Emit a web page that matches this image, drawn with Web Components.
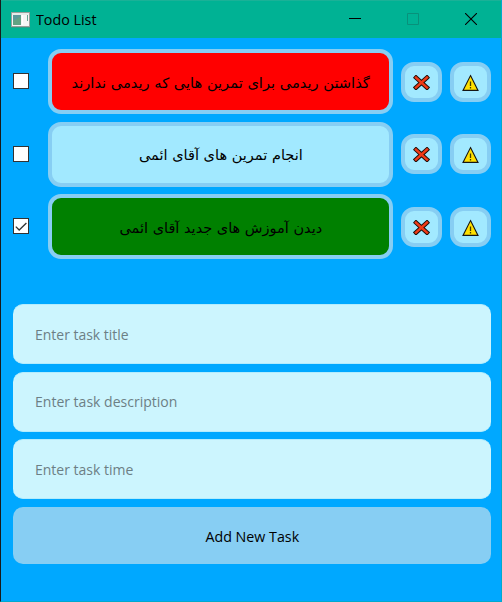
<!DOCTYPE html>
<html lang="fa">
<head>
<meta charset="utf-8">
<title>Todo List</title>
<style>
html,body{margin:0;height:100%;overflow:hidden}
body{font-family:"Open Sans","Noto Sans",sans-serif;font-size:15px;color:#000}
</style>
</head>
<body>
<todo-window></todo-window>
<script>
const define = (name, html, setup) => customElements.define(name, class extends HTMLElement {
  constructor() {
    super();
    const t = document.createElement('template');
    t.innerHTML = html;
    this.attachShadow({ mode: 'open' }).append(t.content.cloneNode(true));
  }
  connectedCallback() { if (setup) setup(this, this.shadowRoot); }
});

// Text squeezed horizontally to a given width, keeping letters joined.
define('fit-text', `<style>
:host{display:inline-flex;justify-content:center;white-space:nowrap;line-height:20px}
span{display:block;flex:none;transform-origin:50% 50%}
</style><span><slot></slot></span>`, (el, root) => {
  const span = root.querySelector('span');
  const want = +el.getAttribute('width');
  el.style.width = want + 'px';
  if (el.hasAttribute('start')) { el.style.justifyContent = 'flex-start'; span.style.transformOrigin = '0 50%'; }
  span.style.transform = `scaleX(${want / span.offsetWidth})`;
});

define('title-bar', `<style>
:host{display:flex;align-items:center;height:38px;background:#00b294;box-sizing:border-box;border-top:1px solid #1ab197;padding-left:10px}
svg{display:block;flex:none}
fit-text{margin-left:6px;margin-bottom:1px}
.gap{flex:1}
.controls{display:grid;grid-template-columns:58px 58px 58px;justify-items:center;align-items:center;margin-right:1px;margin-bottom:1px}
</style>
<svg width="19" height="16" viewBox="0 0 19 16"><rect x=".5" y=".5" width="18" height="14" fill="#f4f6f5" stroke="#999f9c"/><path d="M1 2h17" stroke="#d9e0dd"/><rect x="2" y="3" width="8" height="10" fill="#5b9a9c"/><path d="M2 13V9l8-5v9z" fill="#64a57c" opacity=".75"/><path d="M11.5 3v10" stroke="#fff"/><rect x="16" y="3" width="1" height="6" fill="#67a492"/><path d="M0 15.5h19" stroke="#568c7c" opacity=".5"/></svg>
<fit-text width="61" start>Todo List</fit-text>
<span class="gap"></span>
<div class="controls">
<svg width="12" height="12" viewBox="0 0 12 12"><path d="M0 5.5h12" stroke="#000"/></svg>
<svg width="12" height="12" viewBox="0 0 12 12"><path d="M.5.5h11v11H.5z" fill="none" stroke="#08917b"/></svg>
<svg width="12" height="12" viewBox="0 0 12 12"><path d="M0 0l12 12M12 0L0 12" stroke="#000" stroke-width="1.1"/></svg>
</div>`);

define('check-box', `<style>
:host{display:block;box-sizing:border-box;width:16px;height:16px;background:#fff;border:1px solid #333;margin-bottom:1px}
svg{display:none}
:host([checked]) svg{display:block}
</style><svg width="14" height="14" viewBox="0 0 14 14"><path d="M1.8 7.6l3.4 3.4 7.2-7" fill="none" stroke="#333" stroke-width="1.3"/></svg>`);

define('icon-button', `<style>
:host{display:flex;align-items:center;justify-content:center;box-sizing:border-box;width:41px;height:40px;border:4px solid #87cef3;border-radius:13px;background:#a2e9ff}
svg{display:none;margin-top:1px}
:host([kind=delete]) .delete,:host([kind=info]) .info{display:block}
</style>
<svg class="delete" width="17" height="15" viewBox="0 0 17 15"><path d="M3 2.6l11 10M14 2.6l-11 10" stroke="#1c0f0a" stroke-width="4.4" stroke-linecap="square"/><path d="M3 2.6l11 10M14 2.6l-11 10" stroke="#f03a17" stroke-width="2.5" stroke-linecap="square"/></svg>
<svg class="info" width="17" height="17" viewBox="0 0 17 17"><path d="M8.5 1.6L16 16.4H1z" fill="#ffe000" stroke="#161616" stroke-width="1.1"/><path d="M8.5 7.5v4.5M8.5 13v1.6" stroke="#443c00" stroke-width="1.3"/></svg>`);

define('task-row', `<style>
:host{display:grid;column-gap:8px;grid-template-columns:27px 345px 41px 41px;align-items:center;height:65px}
.title{display:flex;align-items:center;justify-content:center;box-sizing:border-box;height:65px;border:4px solid #87cef3;border-radius:13px;padding-top:2px;background:var(--fill,#a2e9ff);direction:rtl;font-family:"DejaVu Sans",sans-serif;font-size:14px}
:host([state=late]){--fill:#f00}
:host([state=done]){--fill:#008000}
</style>
<check-box></check-box><div class="title"><slot></slot></div><icon-button kind="delete"></icon-button><icon-button kind="info"></icon-button>`,
(el, root) => root.querySelector('check-box').toggleAttribute('checked', el.getAttribute('state') === 'done'));

define('text-field', `<style>
:host{display:flex;align-items:center;box-sizing:border-box;height:60px;padding:0 0 1px 21.5px;background:#ccf5fe;border:1px solid #b4ecfd;border-left:0;border-right:0;border-radius:10px;color:#6c7f85}
</style><slot></slot>`);

define('push-button', `<style>
:host{display:flex;align-items:center;justify-content:center;height:57px;border-radius:10px;background:#87cef3;padding-top:2px;box-sizing:border-box}
</style><slot></slot>`);

define('todo-window', `<style>
:host{display:block;box-sizing:border-box;height:602px;border-left:1px solid #171b1c;border-right:1px solid #00abcc;border-bottom:1px solid #00abcc;background:#00a8ff}
main{padding:11px 10px 0 12px}
.tasks{display:grid;row-gap:7.5px}
.form{display:grid;row-gap:7.5px;margin-top:45px}
</style>
<title-bar></title-bar>
<main>
<section class="tasks">
<task-row state="late"><fit-text width="298">گذاشتن ریدمی برای تمرین هایی که ریدمی ندارند</fit-text></task-row>
<task-row><fit-text width="164">انجام تمرین های آقای ائمی</fit-text></task-row>
<task-row state="done"><fit-text width="203">دیدن آموزش های جدید آقای ائمی</fit-text></task-row>
</section>
<section class="form">
<text-field><fit-text width="94" start>Enter task title</fit-text></text-field>
<text-field><fit-text width="142" start>Enter task description</fit-text></text-field>
<text-field><fit-text width="98" start>Enter task time</fit-text></text-field>
<push-button><fit-text width="94">Add New Task</fit-text></push-button>
</section>
</main>`);
</script>
</body>
</html>
